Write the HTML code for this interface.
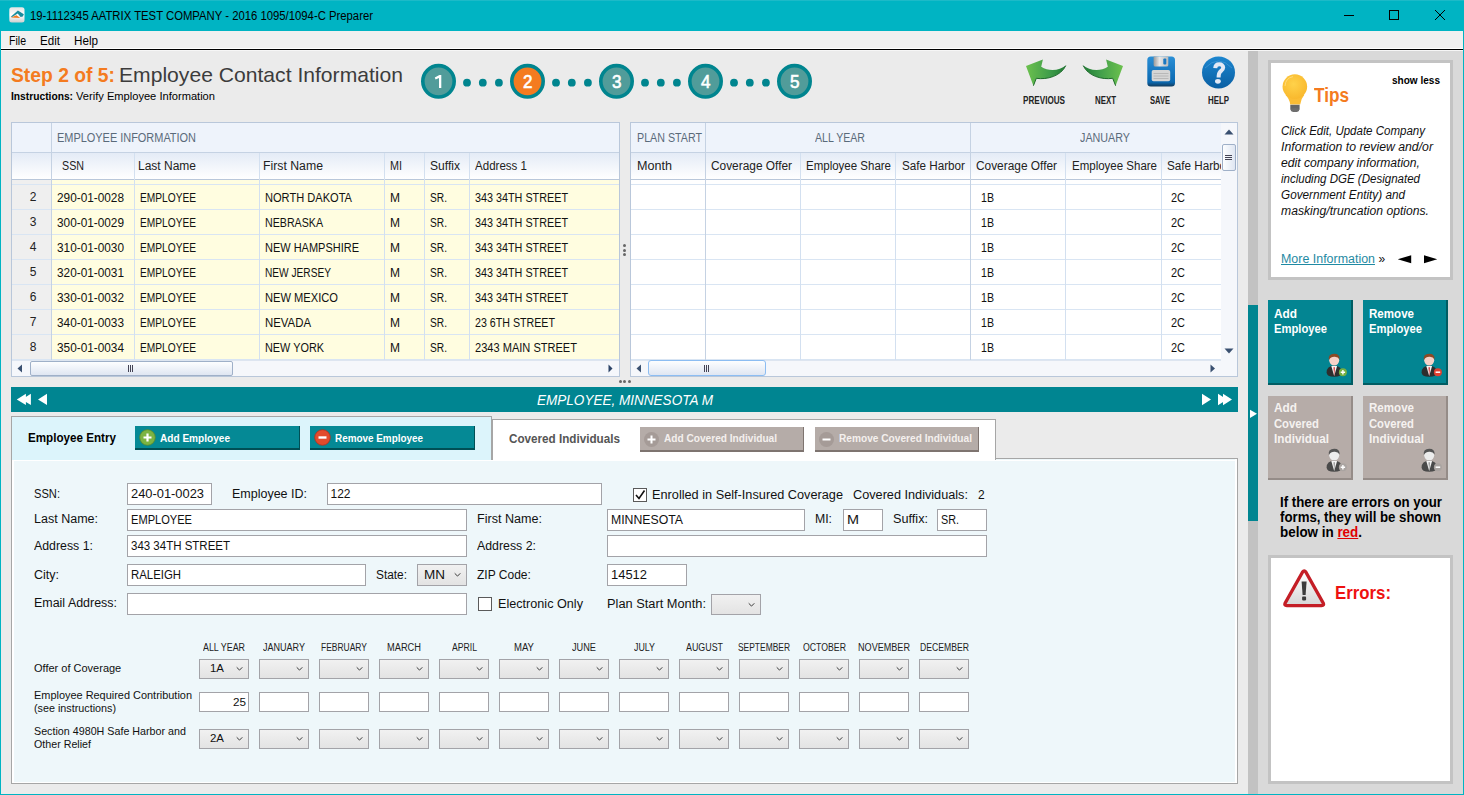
<!DOCTYPE html>
<html><head><meta charset="utf-8"><style>*{margin:0;padding:0}
html,body{width:1464px;height:795px;overflow:hidden;background:#ebebeb}
body{position:relative;font-family:"Liberation Sans",sans-serif}
div{position:absolute}
.t{white-space:nowrap;transform-origin:0 0}
</style></head><body>
<div style="left:0px;top:0px;width:1464px;height:31px;background:#00b4c3"></div>
<div style="left:0px;top:31px;width:1px;height:764px;background:#00b4c3"></div>
<div style="left:1463px;top:31px;width:1px;height:764px;background:#00b4c3"></div>
<div style="left:0px;top:794px;width:1464px;height:1px;background:#00b4c3"></div>
<div style="left:1px;top:31px;width:1462px;height:17px;background:#f0f0f0"></div>
<div style="left:1px;top:48px;width:1462px;height:1px;background:#ffffff"></div>
<div style="left:1px;top:49px;width:1462px;height:1px;background:#000000"></div>
<div style="left:1px;top:50px;width:1462px;height:1px;background:#f6f6f6"></div>
<div style="left:1px;top:51px;width:1247px;height:743px;background:#ebebeb"></div>
<div style="left:1248px;top:51px;width:10px;height:743px;background:#c2c2c2"></div>
<div style="left:1248px;top:305px;width:10px;height:216px;background:#008591"></div>
<svg style="position:absolute;left:1249px;top:409px" width="9" height="10"><path d="M1 0.7 L8 4.8 L1 9 Z" fill="#fff"/></svg>
<div style="left:1258px;top:51px;width:205px;height:743px;background:#d9d9d9"></div>
<svg style="position:absolute;left:9px;top:7px" width="16" height="16" viewBox="0 0 16 16">
<defs><linearGradient id="gi" x1="0" y1="0" x2="0" y2="1"><stop offset="0" stop-color="#e4e4e4"/><stop offset="0.5" stop-color="#ffffff"/><stop offset="1" stop-color="#cfcfcf"/></linearGradient></defs>
<rect x="0.3" y="0.3" width="15.2" height="15.2" rx="2.5" fill="url(#gi)"/>
<path d="M1.8 9.8 L8.9 3.6 L14.9 7.2 L13.8 9.6 L11.6 9.9 L8.7 6.6 L3.2 10 Z" fill="#1a8d9e"/>
<path d="M1.8 10.6 L7.5 8.2 L11.2 10.9 Z" fill="#f07a20"/></svg>
<div class="t" style="top:9.84px;font-size:12px;line-height:12px;color:#000;left:30.00px;transform:scaleX(0.9423);">19-1112345 AATRIX TEST COMPANY - 2016 1095/1094-C Preparer</div>
<div style="left:1344px;top:15px;width:10px;height:1px;background:#000"></div>
<div style="left:0px;top:0px;width:1464px;height:1px;background:#1cbac8"></div>
<div style="left:1389px;top:10px;width:10px;height:10px;border:1px solid #000;box-sizing:border-box"></div>
<svg style="position:absolute;left:1434px;top:9px" width="12" height="12"><path d="M1 1 L11 11 M11 1 L1 11" stroke="#000" stroke-width="1"/></svg>
<div class="t" style="top:34.84px;font-size:12px;line-height:12px;color:#000;left:9.00px;transform:scaleX(0.8788);">File</div>
<div class="t" style="top:34.84px;font-size:12px;line-height:12px;color:#000;left:40.00px;transform:scaleX(0.9668);">Edit</div>
<div class="t" style="top:34.84px;font-size:12px;line-height:12px;color:#000;left:74.00px;transform:scaleX(0.9722);">Help</div>
<div class="t" style="top:63.82px;font-size:21px;line-height:21px;color:#f47b20;font-weight:700;left:11.00px;transform:scaleX(0.9188);">Step 2 of 5:</div>
<div class="t" style="top:63.82px;font-size:21px;line-height:21px;color:#3c3c3c;left:119.00px;transform:scaleX(1.0054);">Employee Contact Information</div>
<div class="t" style="top:90.69px;font-size:11px;line-height:11px;color:#000;font-weight:700;left:11.00px;transform:scaleX(0.9306);">Instructions:</div>
<div class="t" style="top:90.69px;font-size:11px;line-height:11px;color:#000;left:76.00px;transform:scaleX(1.0103);">Verify Employee Information</div>
<svg style="position:absolute;left:400px;top:55px" width="430" height="55"><circle cx="38.5" cy="26.3" r="15.7" fill="#519c9a" stroke="#00858f" stroke-width="3.6"/><circle cx="67.0" cy="27.7" r="3.9" fill="#00858f"/><circle cx="82.8" cy="27.7" r="3.9" fill="#00858f"/><circle cx="98.9" cy="27.7" r="3.9" fill="#00858f"/><circle cx="127.5" cy="26.3" r="15.7" fill="#f47b20" stroke="#00858f" stroke-width="3.6"/><circle cx="156.0" cy="27.7" r="3.9" fill="#00858f"/><circle cx="171.8" cy="27.7" r="3.9" fill="#00858f"/><circle cx="187.9" cy="27.7" r="3.9" fill="#00858f"/><circle cx="216.5" cy="26.3" r="15.7" fill="#519c9a" stroke="#00858f" stroke-width="3.6"/><circle cx="245.0" cy="27.7" r="3.9" fill="#00858f"/><circle cx="260.8" cy="27.7" r="3.9" fill="#00858f"/><circle cx="276.9" cy="27.7" r="3.9" fill="#00858f"/><circle cx="305.5" cy="26.3" r="15.7" fill="#519c9a" stroke="#00858f" stroke-width="3.6"/><circle cx="334.0" cy="27.7" r="3.9" fill="#00858f"/><circle cx="349.8" cy="27.7" r="3.9" fill="#00858f"/><circle cx="365.9" cy="27.7" r="3.9" fill="#00858f"/><circle cx="394.5" cy="26.3" r="15.7" fill="#519c9a" stroke="#00858f" stroke-width="3.6"/></svg>
<svg style="position:absolute;left:430px;top:70px" width="16" height="22"><path d="M4.8 7.4 L9.4 4.9 H11.3 V18.1 H9 V7.9 L5.6 9.6 Z" fill="#fff"/></svg>
<div class="t" style="top:73.06px;font-size:18px;line-height:18px;color:#fff;-webkit-text-stroke:0.6px #fff;left:523.05px;transform:scaleX(0.9485);">2</div>
<div class="t" style="top:73.06px;font-size:18px;line-height:18px;color:#fff;-webkit-text-stroke:0.6px #fff;left:612.05px;transform:scaleX(0.9485);">3</div>
<div class="t" style="top:73.06px;font-size:18px;line-height:18px;color:#fff;-webkit-text-stroke:0.6px #fff;left:701.05px;transform:scaleX(0.9485);">4</div>
<div class="t" style="top:73.06px;font-size:18px;line-height:18px;color:#fff;-webkit-text-stroke:0.6px #fff;left:790.05px;transform:scaleX(0.9485);">5</div>
<svg style="position:absolute;left:1015px;top:50px" width="120" height="45" viewBox="0 0 120 45">
<defs><linearGradient id="ga" x1="0" y1="0" x2="1" y2="0"><stop offset="0" stop-color="#6cc14e"/><stop offset="0.6" stop-color="#3f9d4a"/><stop offset="1" stop-color="#1f7a34"/></linearGradient>
<linearGradient id="gb" x1="1" y1="0" x2="0" y2="0"><stop offset="0" stop-color="#6cc14e"/><stop offset="0.6" stop-color="#3f9d4a"/><stop offset="1" stop-color="#1f7a34"/></linearGradient></defs>
<path d="M27.9 9.4 L11 16 L18.4 35.7 L21.3 28.3 C32 30 46 26 50.8 15.6 C45 20.5 34 22 26.2 16.8 Z" fill="url(#ga)"/>
<path d="M18.4 35.7 L21.3 28.3 C32 30 46 26 50.8 15.6" stroke="#1d6a2a" stroke-width="1" fill="none"/>
<path d="M91.1 9.4 L108 16 L100.6 35.7 L97.7 28.3 C87 30 73 26 68.2 15.6 C74 20.5 85 22 92.8 16.8 Z" fill="url(#gb)"/>
<path d="M100.6 35.7 L97.7 28.3 C87 30 73 26 68.2 15.6" stroke="#1d6a2a" stroke-width="1" fill="none"/>
</svg>
<svg style="position:absolute;left:1147px;top:56px" width="30" height="32" viewBox="0 0 30 32">
<defs><linearGradient id="gs" x1="0" y1="0" x2="0" y2="1"><stop offset="0" stop-color="#2a8fd6"/><stop offset="0.85" stop-color="#0a68b0"/><stop offset="1" stop-color="#123a5a"/></linearGradient>
<linearGradient id="gm" x1="0" y1="0" x2="1" y2="0"><stop offset="0" stop-color="#999"/><stop offset="0.4" stop-color="#e8e8e8"/><stop offset="1" stop-color="#bbb"/></linearGradient></defs>
<rect x="0.3" y="0.6" width="27.7" height="30" rx="3.5" fill="url(#gs)"/>
<path d="M6.6 0.6 H21.3 V9 Q21.3 10.6 19.7 10.6 H8.2 Q6.6 10.6 6.6 9 Z" fill="url(#gm)"/>
<rect x="16.3" y="2.5" width="3" height="6" rx="1" fill="#1a78c2"/>
<rect x="4.7" y="14" width="18.5" height="11.3" rx="1.8" fill="#d6d6d6"/>
<path d="M6.5 17.5 H21.5 M6.5 20 H21.5 M6.5 22.5 H21.5" stroke="#b0b0b0" stroke-width="0.8"/>
</svg>
<svg style="position:absolute;left:1201px;top:56px" width="35" height="34" viewBox="0 0 35 34">
<defs><linearGradient id="gh" x1="0" y1="0" x2="0" y2="1"><stop offset="0" stop-color="#1c86cf"/><stop offset="1" stop-color="#0a5fa3"/></linearGradient></defs>
<ellipse cx="17.5" cy="16.4" rx="16.5" ry="16" fill="url(#gh)"/>
<path d="M4 12 Q17.5 -2 31 12" stroke="#5aa8e0" stroke-width="0.8" fill="none" opacity="0.6"/>
<path d="M14.2 12.2 C14.4 9.2 16.3 8.2 18.2 8.2 C20.6 8.2 22.2 9.6 22.2 11.6 C22.2 13.8 20.2 14.8 19.1 15.8 C18.2 16.7 17.6 17.6 17.6 21.6" stroke="#e3e9f5" stroke-width="4" fill="none"/>
<ellipse cx="16.9" cy="25.3" rx="2.9" ry="2.4" fill="#e3e9f5"/>
</svg>
<div class="t" style="top:96.03px;font-size:10px;line-height:10px;color:#222;font-weight:700;left:1023.00px;transform:scaleX(0.8126);">PREVIOUS</div>
<div class="t" style="top:96.03px;font-size:10px;line-height:10px;color:#222;font-weight:700;left:1094.50px;transform:scaleX(0.7873);">NEXT</div>
<div class="t" style="top:96.03px;font-size:10px;line-height:10px;color:#222;font-weight:700;left:1150.00px;transform:scaleX(0.7547);">SAVE</div>
<div class="t" style="top:96.03px;font-size:10px;line-height:10px;color:#222;font-weight:700;left:1207.50px;transform:scaleX(0.7873);">HELP</div>
<div style="left:11px;top:122px;width:609px;height:255px;background:#f3f6fb;border:1px solid #b9c7da;box-sizing:border-box"></div>
<div style="left:12px;top:123px;width:607px;height:29px;background:#eef3fb"></div>
<div style="left:12px;top:152px;width:607px;height:1px;background:#c5d2e3"></div>
<div style="left:12px;top:153px;width:607px;height:26px;background:linear-gradient(#e4ebf6,#ffffff)"></div>
<div style="left:12px;top:179px;width:607px;height:1px;background:#b9c7da"></div>
<div style="left:12px;top:180px;width:607px;height:180px;background:#fffde0"></div>
<div style="left:12px;top:180px;width:39px;height:180px;background:#efefef"></div>
<div style="left:12px;top:184px;width:607px;height:1px;background:#d9e5f3"></div>
<div style="left:12px;top:209px;width:607px;height:1px;background:#d9e5f3"></div>
<div style="left:12px;top:234px;width:607px;height:1px;background:#d9e5f3"></div>
<div style="left:12px;top:259px;width:607px;height:1px;background:#d9e5f3"></div>
<div style="left:12px;top:284px;width:607px;height:1px;background:#d9e5f3"></div>
<div style="left:12px;top:309px;width:607px;height:1px;background:#d9e5f3"></div>
<div style="left:12px;top:334px;width:607px;height:1px;background:#d9e5f3"></div>
<div style="left:12px;top:359px;width:607px;height:1px;background:#d9e5f3"></div>
<div style="left:51px;top:123px;width:1px;height:237px;background:#c5d2e3"></div>
<div style="left:134px;top:153px;width:1px;height:207px;background:#d3e0f0"></div>
<div style="left:259px;top:153px;width:1px;height:207px;background:#d3e0f0"></div>
<div style="left:384px;top:153px;width:1px;height:207px;background:#d3e0f0"></div>
<div style="left:424px;top:153px;width:1px;height:207px;background:#d3e0f0"></div>
<div style="left:469px;top:153px;width:1px;height:207px;background:#d3e0f0"></div>
<div class="t" style="top:131.84px;font-size:12px;line-height:12px;color:#5a6a7a;left:57.00px;transform:scaleX(0.9117);">EMPLOYEE INFORMATION</div>
<div class="t" style="top:159.84px;font-size:12px;line-height:12px;color:#222;left:62.00px;transform:scaleX(0.8911);">SSN</div>
<div class="t" style="top:159.84px;font-size:12px;line-height:12px;color:#222;left:138.00px;">Last Name</div>
<div class="t" style="top:159.84px;font-size:12px;line-height:12px;color:#222;left:263.00px;transform:scaleX(1.0226);">First Name</div>
<div class="t" style="top:159.84px;font-size:12px;line-height:12px;color:#222;left:390.00px;transform:scaleX(0.8993);">MI</div>
<div class="t" style="top:159.84px;font-size:12px;line-height:12px;color:#222;left:430.00px;transform:scaleX(1.0068);">Suffix</div>
<div class="t" style="top:159.84px;font-size:12px;line-height:12px;color:#222;left:475.00px;transform:scaleX(0.9624);">Address 1</div>
<div class="t" style="top:190.84px;font-size:12px;line-height:12px;color:#222;left:29.66px;">2</div>
<div class="t" style="top:191.84px;font-size:12px;line-height:12px;color:#111;left:57.20px;transform:scaleX(0.9844);">290-01-0028</div>
<div class="t" style="top:191.84px;font-size:12px;line-height:12px;color:#111;left:140.00px;transform:scaleX(0.8481);">EMPLOYEE</div>
<div class="t" style="top:191.84px;font-size:12px;line-height:12px;color:#111;left:265.00px;transform:scaleX(0.9232);">NORTH DAKOTA</div>
<div class="t" style="top:191.84px;font-size:12px;line-height:12px;color:#111;left:390.00px;">M</div>
<div class="t" style="top:191.84px;font-size:12px;line-height:12px;color:#111;left:430.00px;transform:scaleX(0.8493);">SR.</div>
<div class="t" style="top:191.84px;font-size:12px;line-height:12px;color:#111;left:475.00px;transform:scaleX(0.8996);">343 34TH STREET</div>
<div class="t" style="top:215.84px;font-size:12px;line-height:12px;color:#222;left:29.66px;">3</div>
<div class="t" style="top:216.84px;font-size:12px;line-height:12px;color:#111;left:57.20px;transform:scaleX(0.9844);">300-01-0029</div>
<div class="t" style="top:216.84px;font-size:12px;line-height:12px;color:#111;left:140.00px;transform:scaleX(0.8481);">EMPLOYEE</div>
<div class="t" style="top:216.84px;font-size:12px;line-height:12px;color:#111;left:265.00px;transform:scaleX(0.8874);">NEBRASKA</div>
<div class="t" style="top:216.84px;font-size:12px;line-height:12px;color:#111;left:390.00px;">M</div>
<div class="t" style="top:216.84px;font-size:12px;line-height:12px;color:#111;left:430.00px;transform:scaleX(0.8493);">SR.</div>
<div class="t" style="top:216.84px;font-size:12px;line-height:12px;color:#111;left:475.00px;transform:scaleX(0.8996);">343 34TH STREET</div>
<div class="t" style="top:240.84px;font-size:12px;line-height:12px;color:#222;left:29.66px;">4</div>
<div class="t" style="top:241.84px;font-size:12px;line-height:12px;color:#111;left:57.20px;transform:scaleX(0.9844);">310-01-0030</div>
<div class="t" style="top:241.84px;font-size:12px;line-height:12px;color:#111;left:140.00px;transform:scaleX(0.8481);">EMPLOYEE</div>
<div class="t" style="top:241.84px;font-size:12px;line-height:12px;color:#111;left:265.00px;transform:scaleX(0.9154);">NEW HAMPSHIRE</div>
<div class="t" style="top:241.84px;font-size:12px;line-height:12px;color:#111;left:390.00px;">M</div>
<div class="t" style="top:241.84px;font-size:12px;line-height:12px;color:#111;left:430.00px;transform:scaleX(0.8493);">SR.</div>
<div class="t" style="top:241.84px;font-size:12px;line-height:12px;color:#111;left:475.00px;transform:scaleX(0.8996);">343 34TH STREET</div>
<div class="t" style="top:265.84px;font-size:12px;line-height:12px;color:#222;left:29.66px;">5</div>
<div class="t" style="top:266.84px;font-size:12px;line-height:12px;color:#111;left:57.20px;transform:scaleX(0.9844);">320-01-0031</div>
<div class="t" style="top:266.84px;font-size:12px;line-height:12px;color:#111;left:140.00px;transform:scaleX(0.8481);">EMPLOYEE</div>
<div class="t" style="top:266.84px;font-size:12px;line-height:12px;color:#111;left:265.00px;transform:scaleX(0.8460);">NEW JERSEY</div>
<div class="t" style="top:266.84px;font-size:12px;line-height:12px;color:#111;left:390.00px;">M</div>
<div class="t" style="top:266.84px;font-size:12px;line-height:12px;color:#111;left:430.00px;transform:scaleX(0.8493);">SR.</div>
<div class="t" style="top:266.84px;font-size:12px;line-height:12px;color:#111;left:475.00px;transform:scaleX(0.8996);">343 34TH STREET</div>
<div class="t" style="top:290.84px;font-size:12px;line-height:12px;color:#222;left:29.66px;">6</div>
<div class="t" style="top:291.84px;font-size:12px;line-height:12px;color:#111;left:57.20px;transform:scaleX(0.9844);">330-01-0032</div>
<div class="t" style="top:291.84px;font-size:12px;line-height:12px;color:#111;left:140.00px;transform:scaleX(0.8481);">EMPLOYEE</div>
<div class="t" style="top:291.84px;font-size:12px;line-height:12px;color:#111;left:265.00px;transform:scaleX(0.9279);">NEW MEXICO</div>
<div class="t" style="top:291.84px;font-size:12px;line-height:12px;color:#111;left:390.00px;">M</div>
<div class="t" style="top:291.84px;font-size:12px;line-height:12px;color:#111;left:430.00px;transform:scaleX(0.8493);">SR.</div>
<div class="t" style="top:291.84px;font-size:12px;line-height:12px;color:#111;left:475.00px;transform:scaleX(0.8996);">343 34TH STREET</div>
<div class="t" style="top:315.84px;font-size:12px;line-height:12px;color:#222;left:29.66px;">7</div>
<div class="t" style="top:316.84px;font-size:12px;line-height:12px;color:#111;left:57.20px;transform:scaleX(0.9844);">340-01-0033</div>
<div class="t" style="top:316.84px;font-size:12px;line-height:12px;color:#111;left:140.00px;transform:scaleX(0.8481);">EMPLOYEE</div>
<div class="t" style="top:316.84px;font-size:12px;line-height:12px;color:#111;left:265.00px;transform:scaleX(0.9491);">NEVADA</div>
<div class="t" style="top:316.84px;font-size:12px;line-height:12px;color:#111;left:390.00px;">M</div>
<div class="t" style="top:316.84px;font-size:12px;line-height:12px;color:#111;left:430.00px;transform:scaleX(0.8493);">SR.</div>
<div class="t" style="top:316.84px;font-size:12px;line-height:12px;color:#111;left:475.00px;transform:scaleX(0.8886);">23 6TH STREET</div>
<div class="t" style="top:340.84px;font-size:12px;line-height:12px;color:#222;left:29.66px;">8</div>
<div class="t" style="top:341.84px;font-size:12px;line-height:12px;color:#111;left:57.20px;transform:scaleX(0.9844);">350-01-0034</div>
<div class="t" style="top:341.84px;font-size:12px;line-height:12px;color:#111;left:140.00px;transform:scaleX(0.8481);">EMPLOYEE</div>
<div class="t" style="top:341.84px;font-size:12px;line-height:12px;color:#111;left:265.00px;transform:scaleX(0.9060);">NEW YORK</div>
<div class="t" style="top:341.84px;font-size:12px;line-height:12px;color:#111;left:390.00px;">M</div>
<div class="t" style="top:341.84px;font-size:12px;line-height:12px;color:#111;left:430.00px;transform:scaleX(0.8493);">SR.</div>
<div class="t" style="top:341.84px;font-size:12px;line-height:12px;color:#111;left:475.00px;transform:scaleX(0.9214);">2343 MAIN STREET</div>
<div style="left:12px;top:360px;width:607px;height:16px;background:#f5f7fb"></div>
<div style="left:12px;top:360px;width:607px;height:1px;background:#dde5f0"></div>
<svg style="position:absolute;left:16px;top:364px" width="8" height="9"><path d="M6 0.5 L1.5 4.5 L6 8.5 Z" fill="#3a5070"/></svg>
<svg style="position:absolute;left:607px;top:364px" width="8" height="9"><path d="M1.5 0.5 L5.5 4.5 L1.5 8.5 Z" fill="#2c4468"/></svg>
<div style="left:30px;top:361px;width:203px;height:15px;background:linear-gradient(#fdfeff,#dfe6f2);border:1px solid #9fb0c8;border-radius:2px;box-sizing:border-box"></div>
<div style="left:128px;top:365px;width:1px;height:7px;background:#445"></div>
<div style="left:130px;top:365px;width:1px;height:7px;background:#445"></div>
<div style="left:132px;top:365px;width:1px;height:7px;background:#445"></div>
<div style="left:630px;top:122px;width:608px;height:255px;background:#f3f6fb;border:1px solid #b9c7da;box-sizing:border-box"></div>
<div style="left:631px;top:123px;width:590px;height:29px;background:#eef3fb"></div>
<div style="left:631px;top:152px;width:590px;height:1px;background:#c5d2e3"></div>
<div style="left:631px;top:153px;width:590px;height:26px;background:linear-gradient(#e4ebf6,#ffffff)"></div>
<div style="left:631px;top:179px;width:590px;height:1px;background:#b9c7da"></div>
<div style="left:631px;top:180px;width:590px;height:180px;background:#ffffff"></div>
<div style="left:631px;top:184px;width:590px;height:1px;background:#d9e5f3"></div>
<div style="left:631px;top:209px;width:590px;height:1px;background:#d9e5f3"></div>
<div style="left:631px;top:234px;width:590px;height:1px;background:#d9e5f3"></div>
<div style="left:631px;top:259px;width:590px;height:1px;background:#d9e5f3"></div>
<div style="left:631px;top:284px;width:590px;height:1px;background:#d9e5f3"></div>
<div style="left:631px;top:309px;width:590px;height:1px;background:#d9e5f3"></div>
<div style="left:631px;top:334px;width:590px;height:1px;background:#d9e5f3"></div>
<div style="left:631px;top:359px;width:590px;height:1px;background:#d9e5f3"></div>
<div style="left:705px;top:123px;width:1px;height:237px;background:#c5d2e3"></div>
<div style="left:970px;top:123px;width:1px;height:237px;background:#c5d2e3"></div>
<div style="left:800px;top:153px;width:1px;height:207px;background:#d3e0f0"></div>
<div style="left:895px;top:153px;width:1px;height:207px;background:#d3e0f0"></div>
<div style="left:1065px;top:153px;width:1px;height:207px;background:#d3e0f0"></div>
<div style="left:1161px;top:153px;width:1px;height:207px;background:#d3e0f0"></div>
<div class="t" style="top:131.84px;font-size:12px;line-height:12px;color:#5a6a7a;left:636.50px;transform:scaleX(0.8914);">PLAN START</div>
<div class="t" style="top:131.84px;font-size:12px;line-height:12px;color:#5a6a7a;left:814.50px;transform:scaleX(0.8818);">ALL YEAR</div>
<div class="t" style="top:131.84px;font-size:12px;line-height:12px;color:#5a6a7a;left:1080.00px;transform:scaleX(0.8961);">JANUARY</div>
<div class="t" style="top:159.84px;font-size:12px;line-height:12px;color:#222;left:637.00px;transform:scaleX(1.0492);">Month</div>
<div class="t" style="top:159.84px;font-size:12px;line-height:12px;color:#222;left:710.50px;transform:scaleX(0.9899);">Coverage Offer</div>
<div class="t" style="top:159.84px;font-size:12px;line-height:12px;color:#222;left:806.00px;transform:scaleX(0.9581);">Employee Share</div>
<div class="t" style="top:159.84px;font-size:12px;line-height:12px;color:#222;left:901.50px;transform:scaleX(0.9737);">Safe Harbor</div>
<div class="t" style="top:159.84px;font-size:12px;line-height:12px;color:#222;left:976.00px;transform:scaleX(0.9899);">Coverage Offer</div>
<div class="t" style="top:159.84px;font-size:12px;line-height:12px;color:#222;left:1071.50px;transform:scaleX(0.9581);">Employee Share</div>
<div style="left:1166px;top:153px;width:55px;height:26px;overflow:hidden">
<div class="t" style="top:6.84px;font-size:12px;line-height:12px;color:#222;left:1.00px;transform:scaleX(0.9737);">Safe Harbor</div>
</div>
<div class="t" style="top:191.84px;font-size:12px;line-height:12px;color:#111;left:981.00px;transform:scaleX(0.8851);">1B</div>
<div class="t" style="top:191.84px;font-size:12px;line-height:12px;color:#111;left:1171.00px;transform:scaleX(0.9124);">2C</div>
<div class="t" style="top:216.84px;font-size:12px;line-height:12px;color:#111;left:981.00px;transform:scaleX(0.8851);">1B</div>
<div class="t" style="top:216.84px;font-size:12px;line-height:12px;color:#111;left:1171.00px;transform:scaleX(0.9124);">2C</div>
<div class="t" style="top:241.84px;font-size:12px;line-height:12px;color:#111;left:981.00px;transform:scaleX(0.8851);">1B</div>
<div class="t" style="top:241.84px;font-size:12px;line-height:12px;color:#111;left:1171.00px;transform:scaleX(0.9124);">2C</div>
<div class="t" style="top:266.84px;font-size:12px;line-height:12px;color:#111;left:981.00px;transform:scaleX(0.8851);">1B</div>
<div class="t" style="top:266.84px;font-size:12px;line-height:12px;color:#111;left:1171.00px;transform:scaleX(0.9124);">2C</div>
<div class="t" style="top:291.84px;font-size:12px;line-height:12px;color:#111;left:981.00px;transform:scaleX(0.8851);">1B</div>
<div class="t" style="top:291.84px;font-size:12px;line-height:12px;color:#111;left:1171.00px;transform:scaleX(0.9124);">2C</div>
<div class="t" style="top:316.84px;font-size:12px;line-height:12px;color:#111;left:981.00px;transform:scaleX(0.8851);">1B</div>
<div class="t" style="top:316.84px;font-size:12px;line-height:12px;color:#111;left:1171.00px;transform:scaleX(0.9124);">2C</div>
<div class="t" style="top:341.84px;font-size:12px;line-height:12px;color:#111;left:981.00px;transform:scaleX(0.8851);">1B</div>
<div class="t" style="top:341.84px;font-size:12px;line-height:12px;color:#111;left:1171.00px;transform:scaleX(0.9124);">2C</div>
<div style="left:1221px;top:123px;width:16px;height:237px;background:#f5f7fb"></div>
<svg style="position:absolute;left:1224px;top:128px" width="10" height="8"><path d="M0.5 6.5 L5 1.5 L9.5 6.5 Z" fill="#3a5070"/></svg>
<svg style="position:absolute;left:1224px;top:347px" width="10" height="8"><path d="M0.5 1.5 L5 6.5 L9.5 1.5 Z" fill="#3a5070"/></svg>
<div style="left:1222px;top:144px;width:14px;height:27px;background:linear-gradient(90deg,#fdfeff,#dfe6f2);border:1px solid #9fb0c8;border-radius:2px;box-sizing:border-box"></div>
<div style="left:1225px;top:155px;width:7px;height:1px;background:#445"></div>
<div style="left:1225px;top:157px;width:7px;height:1px;background:#445"></div>
<div style="left:1225px;top:159px;width:7px;height:1px;background:#445"></div>
<div style="left:631px;top:360px;width:606px;height:16px;background:#f5f7fb"></div>
<div style="left:631px;top:360px;width:590px;height:1px;background:#dde5f0"></div>
<svg style="position:absolute;left:635px;top:364px" width="8" height="9"><path d="M6 0.5 L1.5 4.5 L6 8.5 Z" fill="#3a5070"/></svg>
<svg style="position:absolute;left:1209px;top:364px" width="8" height="9"><path d="M1.5 0.5 L6 4.5 L1.5 8.5 Z" fill="#3a5070"/></svg>
<div style="left:648px;top:360px;width:118px;height:16px;background:linear-gradient(#fdfeff,#dfe6f2);border:1px solid #8cbdf2;border-radius:3px;box-sizing:border-box"></div>
<div style="left:704px;top:365px;width:1px;height:7px;background:#445"></div>
<div style="left:706px;top:365px;width:1px;height:7px;background:#445"></div>
<div style="left:708px;top:365px;width:1px;height:7px;background:#445"></div>
<div style="left:623px;top:244px;width:3px;height:3px;background:#666;border-radius:50%"></div>
<div style="left:623px;top:248.5px;width:3px;height:3px;background:#666;border-radius:50%"></div>
<div style="left:623px;top:253px;width:3px;height:3px;background:#666;border-radius:50%"></div>
<div style="left:618.5px;top:380px;width:3px;height:3px;background:#666;border-radius:50%"></div>
<div style="left:623px;top:380px;width:3px;height:3px;background:#666;border-radius:50%"></div>
<div style="left:627.5px;top:380px;width:3px;height:3px;background:#666;border-radius:50%"></div>
<div style="left:11px;top:387px;width:1227px;height:25px;background:#008591"></div>
<svg style="position:absolute;left:14px;top:392px" width="40" height="16"><path d="M2.8 7.5 L11.9 1.8 V12.9 Z M7.8 7.5 L16.9 1.8 V12.9 Z M24 7.5 L33 1.8 V12.9 Z" fill="#fff"/></svg>
<svg style="position:absolute;left:1198px;top:392px" width="40" height="16"><path d="M4 1.8 L13 7.5 L4 13.2 Z M20 1.8 L29 7.5 L20 13.2 Z M25 1.8 L34 7.5 L25 13.2 Z" fill="#fff"/></svg>
<div class="t" style="top:392.13px;font-size:15.2px;line-height:15.2px;color:#fff;font-style:italic;left:536.50px;transform:scaleX(0.8913);">EMPLOYEE, MINNESOTA M</div>
<div style="left:11px;top:458px;width:1227px;height:326px;background:#eef7fa;border:1px solid #a6a6a6;box-sizing:border-box"></div>
<div style="left:12px;top:459px;width:2px;height:324px;background:#fff"></div>
<div style="left:12px;top:460px;width:1225px;height:1px;background:#fff"></div>
<div style="left:12px;top:782px;width:1225px;height:1px;background:#fff"></div>
<div style="left:1235px;top:459px;width:2px;height:324px;background:#fff"></div>
<div style="left:11px;top:416px;width:481px;height:44px;background:#dcf4fb;border-top:1px solid #a6a6a6;border-left:1px solid #a6a6a6;border-right:1px solid #a6a6a6;box-sizing:border-box"></div>
<div style="left:492px;top:419px;width:504px;height:41px;background:#fff;border-top:1px solid #a6a6a6;border-left:1px solid #a6a6a6;border-right:1px solid #a6a6a6;box-sizing:border-box"></div>
<div class="t" style="top:431.84px;font-size:12px;line-height:12px;color:#000;font-weight:700;left:27.50px;transform:scaleX(0.9702);">Employee Entry</div>
<div style="left:135px;top:426px;width:165px;height:24px;background:#058995;box-shadow:inset -1px -2px 0 #004f55"></div>
<svg style="position:absolute;left:139px;top:429px" width="17" height="17"><circle cx="8.5" cy="8.5" r="7.8" fill="#7cb342"/><circle cx="8.5" cy="8.5" r="7.8" fill="none" stroke="#5a8a2a" stroke-width="0.8"/><path d="M8.5 4.5 V12.5 M4.5 8.5 H12.5" stroke="#fff" stroke-width="2.2"/></svg>
<div class="t" style="top:432.69px;font-size:11px;line-height:11px;color:#fff;font-weight:700;left:160.00px;transform:scaleX(0.9162);">Add Employee</div>
<div style="left:310px;top:426px;width:165px;height:24px;background:#058995;box-shadow:inset -1px -2px 0 #004f55"></div>
<svg style="position:absolute;left:314px;top:429px" width="17" height="17"><circle cx="8.5" cy="8.5" r="7.8" fill="#e24b2c"/><circle cx="8.5" cy="8.5" r="7.8" fill="none" stroke="#b03020" stroke-width="0.8"/><path d="M4.5 8.5 H12.5" stroke="#fff" stroke-width="2.4"/></svg>
<div class="t" style="top:432.69px;font-size:11px;line-height:11px;color:#fff;font-weight:700;left:335.00px;transform:scaleX(0.8995);">Remove Employee</div>
<div class="t" style="top:432.84px;font-size:12px;line-height:12px;color:#555;font-weight:700;left:508.50px;transform:scaleX(0.9734);">Covered Individuals</div>
<div style="left:640px;top:427px;width:164px;height:25px;background:#b5aca8;box-shadow:inset -1px -2px 0 #7e7470"></div>
<svg style="position:absolute;left:643px;top:431px" width="17" height="17"><circle cx="8.5" cy="8.5" r="7.5" fill="#a59b97"/><path d="M8.5 4.5 V12.5 M4.5 8.5 H12.5" stroke="#fff" stroke-width="2"/></svg>
<div class="t" style="top:433.19px;font-size:11px;line-height:11px;color:#f4f0ee;font-weight:700;left:664.00px;transform:scaleX(0.9198);">Add Covered Individual</div>
<div style="left:815px;top:427px;width:164px;height:25px;background:#b5aca8;box-shadow:inset -1px -2px 0 #7e7470"></div>
<svg style="position:absolute;left:818px;top:431px" width="17" height="17"><circle cx="8.5" cy="8.5" r="7.5" fill="#a59b97"/><path d="M4.5 8.5 H12.5" stroke="#fff" stroke-width="2"/></svg>
<div class="t" style="top:433.19px;font-size:11px;line-height:11px;color:#f4f0ee;font-weight:700;left:839.00px;transform:scaleX(0.9219);">Remove Covered Individual</div>
<div class="t" style="top:487.84px;font-size:12px;line-height:12px;color:#111;left:34.00px;transform:scaleX(0.9281);">SSN:</div>
<div style="left:127px;top:483px;width:85px;height:22px;background:#fff;border:1px solid #a3a3a8;box-sizing:border-box"></div>
<div class="t" style="top:487.84px;font-size:12px;line-height:12px;color:#111;left:130.50px;transform:scaleX(1.0725);">240-01-0023</div>
<div class="t" style="top:487.84px;font-size:12px;line-height:12px;color:#111;left:232.00px;transform:scaleX(1.0412);">Employee ID:</div>
<div style="left:327px;top:483px;width:275px;height:22px;background:#fff;border:1px solid #a3a3a8;box-sizing:border-box"></div>
<div class="t" style="top:487.84px;font-size:12px;line-height:12px;color:#111;left:330.50px;">122</div>
<div style="left:633px;top:488px;width:14px;height:14px;background:#fff;border:1px solid #5a5a5a;box-sizing:border-box"></div>
<svg style="position:absolute;left:634px;top:489px" width="12" height="12"><path d="M2 6 L5 9.5 L10.5 1.5" stroke="#111" stroke-width="1.6" fill="none"/></svg>
<div class="t" style="top:489.34px;font-size:12px;line-height:12px;color:#111;left:652.00px;transform:scaleX(1.0605);">Enrolled in Self-Insured Coverage</div>
<div class="t" style="top:489.34px;font-size:12px;line-height:12px;color:#111;left:853.00px;transform:scaleX(1.0576);">Covered Individuals:</div>
<div class="t" style="top:489.34px;font-size:12px;line-height:12px;color:#111;left:978.00px;">2</div>
<div class="t" style="top:513.34px;font-size:12px;line-height:12px;color:#111;left:34.00px;transform:scaleX(1.0430);">Last Name:</div>
<div style="left:127px;top:509px;width:340px;height:22px;background:#fff;border:1px solid #a3a3a8;box-sizing:border-box"></div>
<div class="t" style="top:513.84px;font-size:12px;line-height:12px;color:#111;left:130.50px;transform:scaleX(0.9238);">EMPLOYEE</div>
<div class="t" style="top:513.34px;font-size:12px;line-height:12px;color:#111;left:477.00px;transform:scaleX(1.0481);">First Name:</div>
<div style="left:607px;top:509px;width:198px;height:22px;background:#fff;border:1px solid #a3a3a8;box-sizing:border-box"></div>
<div class="t" style="top:513.84px;font-size:12px;line-height:12px;color:#111;left:610.50px;transform:scaleX(1.0220);">MINNESOTA</div>
<div class="t" style="top:513.34px;font-size:12px;line-height:12px;color:#111;left:815.00px;transform:scaleX(1.0197);">MI:</div>
<div style="left:843px;top:509px;width:40px;height:22px;background:#fff;border:1px solid #a3a3a8;box-sizing:border-box"></div>
<div class="t" style="top:513.84px;font-size:12px;line-height:12px;color:#111;left:846.50px;transform:scaleX(1.2000);">M</div>
<div class="t" style="top:513.34px;font-size:12px;line-height:12px;color:#111;left:893.00px;transform:scaleX(1.0561);">Suffix:</div>
<div style="left:937px;top:509px;width:50px;height:22px;background:#fff;border:1px solid #a3a3a8;box-sizing:border-box"></div>
<div class="t" style="top:513.84px;font-size:12px;line-height:12px;color:#111;left:940.50px;transform:scaleX(0.8993);">SR.</div>
<div class="t" style="top:540.14px;font-size:12px;line-height:12px;color:#111;left:34.00px;transform:scaleX(1.0283);">Address 1:</div>
<div style="left:127px;top:535px;width:340px;height:22px;background:#fff;border:1px solid #a3a3a8;box-sizing:border-box"></div>
<div class="t" style="top:539.84px;font-size:12px;line-height:12px;color:#111;left:130.50px;transform:scaleX(0.9577);">343 34TH STREET</div>
<div class="t" style="top:540.14px;font-size:12px;line-height:12px;color:#111;left:477.00px;transform:scaleX(1.0283);">Address 2:</div>
<div style="left:607px;top:535px;width:380px;height:22px;background:#fff;border:1px solid #a3a3a8;box-sizing:border-box"></div>
<div class="t" style="top:569.14px;font-size:12px;line-height:12px;color:#111;left:34.00px;transform:scaleX(1.0417);">City:</div>
<div style="left:127px;top:564px;width:239px;height:22px;background:#fff;border:1px solid #a3a3a8;box-sizing:border-box"></div>
<div class="t" style="top:568.84px;font-size:12px;line-height:12px;color:#111;left:130.50px;transform:scaleX(0.9490);">RALEIGH</div>
<div class="t" style="top:569.14px;font-size:12px;line-height:12px;color:#111;left:376.00px;transform:scaleX(0.9885);">State:</div>
<div style="left:417px;top:564px;width:50px;height:22px;background:linear-gradient(#f1f1f1,#e3e3e3);border:1px solid #a3a3a8;box-sizing:border-box"></div>
<svg style="position:absolute;left:454px;top:572.0px" width="7" height="6"><path d="M0.7 1.3 L3.5 4.1 L6.3 1.3" stroke="#3a3a3a" stroke-width="1" fill="none"/></svg>
<div class="t" style="top:568.84px;font-size:12px;line-height:12px;color:#111;left:423.50px;transform:scaleX(1.1247);">MN</div>
<div class="t" style="top:569.14px;font-size:12px;line-height:12px;color:#111;left:477.00px;">ZIP Code:</div>
<div style="left:607px;top:564px;width:80px;height:22px;background:#fff;border:1px solid #a3a3a8;box-sizing:border-box"></div>
<div class="t" style="top:568.84px;font-size:12px;line-height:12px;color:#111;left:610.50px;transform:scaleX(1.0787);">14512</div>
<div class="t" style="top:597.34px;font-size:12px;line-height:12px;color:#111;left:34.00px;transform:scaleX(1.0369);">Email Address:</div>
<div style="left:127px;top:593px;width:340px;height:22px;background:#fff;border:1px solid #a3a3a8;box-sizing:border-box"></div>
<div style="left:478px;top:597px;width:14px;height:14px;background:#fff;border:1px solid #5a5a5a;box-sizing:border-box"></div>
<div class="t" style="top:597.84px;font-size:12px;line-height:12px;color:#111;left:497.50px;transform:scaleX(1.0532);">Electronic Only</div>
<div class="t" style="top:597.84px;font-size:12px;line-height:12px;color:#111;left:607.40px;transform:scaleX(1.0677);">Plan Start Month:</div>
<div style="left:711px;top:594px;width:50px;height:21px;background:linear-gradient(#f1f1f1,#e3e3e3);border:1px solid #a3a3a8;box-sizing:border-box"></div>
<svg style="position:absolute;left:748px;top:601.5px" width="7" height="6"><path d="M0.7 1.3 L3.5 4.1 L6.3 1.3" stroke="#3a3a3a" stroke-width="1" fill="none"/></svg>
<div class="t" style="top:642.54px;font-size:10px;line-height:10px;color:#222;left:203.00px;transform:scaleX(0.8886);">ALL YEAR</div>
<div style="left:199px;top:659px;width:50px;height:20px;background:linear-gradient(#f1f1f1,#e3e3e3);border:1px solid #a3a3a8;box-sizing:border-box"></div>
<svg style="position:absolute;left:236px;top:666.0px" width="7" height="6"><path d="M0.7 1.3 L3.5 4.1 L6.3 1.3" stroke="#3a3a3a" stroke-width="1" fill="none"/></svg>
<div class="t" style="top:662.69px;font-size:11px;line-height:11px;color:#111;left:209.50px;transform:scaleX(1.0394);">1A</div>
<div style="left:199px;top:692px;width:50px;height:20px;background:#fff;border:1px solid #a3a3a8;box-sizing:border-box"></div>
<div class="t" style="top:697.19px;font-size:11px;line-height:11px;color:#111;left:232.50px;transform:scaleX(1.0612);">25</div>
<div style="left:199px;top:729px;width:50px;height:20px;background:linear-gradient(#f1f1f1,#e3e3e3);border:1px solid #a3a3a8;box-sizing:border-box"></div>
<svg style="position:absolute;left:236px;top:736.0px" width="7" height="6"><path d="M0.7 1.3 L3.5 4.1 L6.3 1.3" stroke="#3a3a3a" stroke-width="1" fill="none"/></svg>
<div class="t" style="top:732.69px;font-size:11px;line-height:11px;color:#111;left:209.50px;transform:scaleX(1.0394);">2A</div>
<div class="t" style="top:642.54px;font-size:10px;line-height:10px;color:#222;left:263.00px;transform:scaleX(0.9032);">JANUARY</div>
<div style="left:259px;top:659px;width:50px;height:20px;background:linear-gradient(#f1f1f1,#e3e3e3);border:1px solid #a3a3a8;box-sizing:border-box"></div>
<svg style="position:absolute;left:296px;top:666.0px" width="7" height="6"><path d="M0.7 1.3 L3.5 4.1 L6.3 1.3" stroke="#3a3a3a" stroke-width="1" fill="none"/></svg>
<div style="left:259px;top:692px;width:50px;height:20px;background:#fff;border:1px solid #a3a3a8;box-sizing:border-box"></div>
<div style="left:259px;top:729px;width:50px;height:20px;background:linear-gradient(#f1f1f1,#e3e3e3);border:1px solid #a3a3a8;box-sizing:border-box"></div>
<svg style="position:absolute;left:296px;top:736.0px" width="7" height="6"><path d="M0.7 1.3 L3.5 4.1 L6.3 1.3" stroke="#3a3a3a" stroke-width="1" fill="none"/></svg>
<div class="t" style="top:642.54px;font-size:10px;line-height:10px;color:#222;left:321.00px;transform:scaleX(0.8474);">FEBRUARY</div>
<div style="left:319px;top:659px;width:50px;height:20px;background:linear-gradient(#f1f1f1,#e3e3e3);border:1px solid #a3a3a8;box-sizing:border-box"></div>
<svg style="position:absolute;left:356px;top:666.0px" width="7" height="6"><path d="M0.7 1.3 L3.5 4.1 L6.3 1.3" stroke="#3a3a3a" stroke-width="1" fill="none"/></svg>
<div style="left:319px;top:692px;width:50px;height:20px;background:#fff;border:1px solid #a3a3a8;box-sizing:border-box"></div>
<div style="left:319px;top:729px;width:50px;height:20px;background:linear-gradient(#f1f1f1,#e3e3e3);border:1px solid #a3a3a8;box-sizing:border-box"></div>
<svg style="position:absolute;left:356px;top:736.0px" width="7" height="6"><path d="M0.7 1.3 L3.5 4.1 L6.3 1.3" stroke="#3a3a3a" stroke-width="1" fill="none"/></svg>
<div class="t" style="top:642.54px;font-size:10px;line-height:10px;color:#222;left:387.00px;transform:scaleX(0.9271);">MARCH</div>
<div style="left:379px;top:659px;width:50px;height:20px;background:linear-gradient(#f1f1f1,#e3e3e3);border:1px solid #a3a3a8;box-sizing:border-box"></div>
<svg style="position:absolute;left:416px;top:666.0px" width="7" height="6"><path d="M0.7 1.3 L3.5 4.1 L6.3 1.3" stroke="#3a3a3a" stroke-width="1" fill="none"/></svg>
<div style="left:379px;top:692px;width:50px;height:20px;background:#fff;border:1px solid #a3a3a8;box-sizing:border-box"></div>
<div style="left:379px;top:729px;width:50px;height:20px;background:linear-gradient(#f1f1f1,#e3e3e3);border:1px solid #a3a3a8;box-sizing:border-box"></div>
<svg style="position:absolute;left:416px;top:736.0px" width="7" height="6"><path d="M0.7 1.3 L3.5 4.1 L6.3 1.3" stroke="#3a3a3a" stroke-width="1" fill="none"/></svg>
<div class="t" style="top:642.54px;font-size:10px;line-height:10px;color:#222;left:451.50px;transform:scaleX(0.8649);">APRIL</div>
<div style="left:439px;top:659px;width:50px;height:20px;background:linear-gradient(#f1f1f1,#e3e3e3);border:1px solid #a3a3a8;box-sizing:border-box"></div>
<svg style="position:absolute;left:476px;top:666.0px" width="7" height="6"><path d="M0.7 1.3 L3.5 4.1 L6.3 1.3" stroke="#3a3a3a" stroke-width="1" fill="none"/></svg>
<div style="left:439px;top:692px;width:50px;height:20px;background:#fff;border:1px solid #a3a3a8;box-sizing:border-box"></div>
<div style="left:439px;top:729px;width:50px;height:20px;background:linear-gradient(#f1f1f1,#e3e3e3);border:1px solid #a3a3a8;box-sizing:border-box"></div>
<svg style="position:absolute;left:476px;top:736.0px" width="7" height="6"><path d="M0.7 1.3 L3.5 4.1 L6.3 1.3" stroke="#3a3a3a" stroke-width="1" fill="none"/></svg>
<div class="t" style="top:642.54px;font-size:10px;line-height:10px;color:#222;left:514.00px;transform:scaleX(0.9552);">MAY</div>
<div style="left:499px;top:659px;width:50px;height:20px;background:linear-gradient(#f1f1f1,#e3e3e3);border:1px solid #a3a3a8;box-sizing:border-box"></div>
<svg style="position:absolute;left:536px;top:666.0px" width="7" height="6"><path d="M0.7 1.3 L3.5 4.1 L6.3 1.3" stroke="#3a3a3a" stroke-width="1" fill="none"/></svg>
<div style="left:499px;top:692px;width:50px;height:20px;background:#fff;border:1px solid #a3a3a8;box-sizing:border-box"></div>
<div style="left:499px;top:729px;width:50px;height:20px;background:linear-gradient(#f1f1f1,#e3e3e3);border:1px solid #a3a3a8;box-sizing:border-box"></div>
<svg style="position:absolute;left:536px;top:736.0px" width="7" height="6"><path d="M0.7 1.3 L3.5 4.1 L6.3 1.3" stroke="#3a3a3a" stroke-width="1" fill="none"/></svg>
<div class="t" style="top:642.54px;font-size:10px;line-height:10px;color:#222;left:572.00px;transform:scaleX(0.9187);">JUNE</div>
<div style="left:559px;top:659px;width:50px;height:20px;background:linear-gradient(#f1f1f1,#e3e3e3);border:1px solid #a3a3a8;box-sizing:border-box"></div>
<svg style="position:absolute;left:596px;top:666.0px" width="7" height="6"><path d="M0.7 1.3 L3.5 4.1 L6.3 1.3" stroke="#3a3a3a" stroke-width="1" fill="none"/></svg>
<div style="left:559px;top:692px;width:50px;height:20px;background:#fff;border:1px solid #a3a3a8;box-sizing:border-box"></div>
<div style="left:559px;top:729px;width:50px;height:20px;background:linear-gradient(#f1f1f1,#e3e3e3);border:1px solid #a3a3a8;box-sizing:border-box"></div>
<svg style="position:absolute;left:596px;top:736.0px" width="7" height="6"><path d="M0.7 1.3 L3.5 4.1 L6.3 1.3" stroke="#3a3a3a" stroke-width="1" fill="none"/></svg>
<div class="t" style="top:642.54px;font-size:10px;line-height:10px;color:#222;left:633.50px;transform:scaleX(0.8854);">JULY</div>
<div style="left:619px;top:659px;width:50px;height:20px;background:linear-gradient(#f1f1f1,#e3e3e3);border:1px solid #a3a3a8;box-sizing:border-box"></div>
<svg style="position:absolute;left:656px;top:666.0px" width="7" height="6"><path d="M0.7 1.3 L3.5 4.1 L6.3 1.3" stroke="#3a3a3a" stroke-width="1" fill="none"/></svg>
<div style="left:619px;top:692px;width:50px;height:20px;background:#fff;border:1px solid #a3a3a8;box-sizing:border-box"></div>
<div style="left:619px;top:729px;width:50px;height:20px;background:linear-gradient(#f1f1f1,#e3e3e3);border:1px solid #a3a3a8;box-sizing:border-box"></div>
<svg style="position:absolute;left:656px;top:736.0px" width="7" height="6"><path d="M0.7 1.3 L3.5 4.1 L6.3 1.3" stroke="#3a3a3a" stroke-width="1" fill="none"/></svg>
<div class="t" style="top:642.54px;font-size:10px;line-height:10px;color:#222;left:685.50px;transform:scaleX(0.8879);">AUGUST</div>
<div style="left:679px;top:659px;width:50px;height:20px;background:linear-gradient(#f1f1f1,#e3e3e3);border:1px solid #a3a3a8;box-sizing:border-box"></div>
<svg style="position:absolute;left:716px;top:666.0px" width="7" height="6"><path d="M0.7 1.3 L3.5 4.1 L6.3 1.3" stroke="#3a3a3a" stroke-width="1" fill="none"/></svg>
<div style="left:679px;top:692px;width:50px;height:20px;background:#fff;border:1px solid #a3a3a8;box-sizing:border-box"></div>
<div style="left:679px;top:729px;width:50px;height:20px;background:linear-gradient(#f1f1f1,#e3e3e3);border:1px solid #a3a3a8;box-sizing:border-box"></div>
<svg style="position:absolute;left:716px;top:736.0px" width="7" height="6"><path d="M0.7 1.3 L3.5 4.1 L6.3 1.3" stroke="#3a3a3a" stroke-width="1" fill="none"/></svg>
<div class="t" style="top:642.54px;font-size:10px;line-height:10px;color:#222;left:738.00px;transform:scaleX(0.8430);">SEPTEMBER</div>
<div style="left:739px;top:659px;width:50px;height:20px;background:linear-gradient(#f1f1f1,#e3e3e3);border:1px solid #a3a3a8;box-sizing:border-box"></div>
<svg style="position:absolute;left:776px;top:666.0px" width="7" height="6"><path d="M0.7 1.3 L3.5 4.1 L6.3 1.3" stroke="#3a3a3a" stroke-width="1" fill="none"/></svg>
<div style="left:739px;top:692px;width:50px;height:20px;background:#fff;border:1px solid #a3a3a8;box-sizing:border-box"></div>
<div style="left:739px;top:729px;width:50px;height:20px;background:linear-gradient(#f1f1f1,#e3e3e3);border:1px solid #a3a3a8;box-sizing:border-box"></div>
<svg style="position:absolute;left:776px;top:736.0px" width="7" height="6"><path d="M0.7 1.3 L3.5 4.1 L6.3 1.3" stroke="#3a3a3a" stroke-width="1" fill="none"/></svg>
<div class="t" style="top:642.54px;font-size:10px;line-height:10px;color:#222;left:802.50px;transform:scaleX(0.8725);">OCTOBER</div>
<div style="left:799px;top:659px;width:50px;height:20px;background:linear-gradient(#f1f1f1,#e3e3e3);border:1px solid #a3a3a8;box-sizing:border-box"></div>
<svg style="position:absolute;left:836px;top:666.0px" width="7" height="6"><path d="M0.7 1.3 L3.5 4.1 L6.3 1.3" stroke="#3a3a3a" stroke-width="1" fill="none"/></svg>
<div style="left:799px;top:692px;width:50px;height:20px;background:#fff;border:1px solid #a3a3a8;box-sizing:border-box"></div>
<div style="left:799px;top:729px;width:50px;height:20px;background:linear-gradient(#f1f1f1,#e3e3e3);border:1px solid #a3a3a8;box-sizing:border-box"></div>
<svg style="position:absolute;left:836px;top:736.0px" width="7" height="6"><path d="M0.7 1.3 L3.5 4.1 L6.3 1.3" stroke="#3a3a3a" stroke-width="1" fill="none"/></svg>
<div class="t" style="top:642.54px;font-size:10px;line-height:10px;color:#222;left:858.00px;transform:scaleX(0.9085);">NOVEMBER</div>
<div style="left:859px;top:659px;width:50px;height:20px;background:linear-gradient(#f1f1f1,#e3e3e3);border:1px solid #a3a3a8;box-sizing:border-box"></div>
<svg style="position:absolute;left:896px;top:666.0px" width="7" height="6"><path d="M0.7 1.3 L3.5 4.1 L6.3 1.3" stroke="#3a3a3a" stroke-width="1" fill="none"/></svg>
<div style="left:859px;top:692px;width:50px;height:20px;background:#fff;border:1px solid #a3a3a8;box-sizing:border-box"></div>
<div style="left:859px;top:729px;width:50px;height:20px;background:linear-gradient(#f1f1f1,#e3e3e3);border:1px solid #a3a3a8;box-sizing:border-box"></div>
<svg style="position:absolute;left:896px;top:736.0px" width="7" height="6"><path d="M0.7 1.3 L3.5 4.1 L6.3 1.3" stroke="#3a3a3a" stroke-width="1" fill="none"/></svg>
<div class="t" style="top:642.54px;font-size:10px;line-height:10px;color:#222;left:919.50px;transform:scaleX(0.8644);">DECEMBER</div>
<div style="left:919px;top:659px;width:50px;height:20px;background:linear-gradient(#f1f1f1,#e3e3e3);border:1px solid #a3a3a8;box-sizing:border-box"></div>
<svg style="position:absolute;left:956px;top:666.0px" width="7" height="6"><path d="M0.7 1.3 L3.5 4.1 L6.3 1.3" stroke="#3a3a3a" stroke-width="1" fill="none"/></svg>
<div style="left:919px;top:692px;width:50px;height:20px;background:#fff;border:1px solid #a3a3a8;box-sizing:border-box"></div>
<div style="left:919px;top:729px;width:50px;height:20px;background:linear-gradient(#f1f1f1,#e3e3e3);border:1px solid #a3a3a8;box-sizing:border-box"></div>
<svg style="position:absolute;left:956px;top:736.0px" width="7" height="6"><path d="M0.7 1.3 L3.5 4.1 L6.3 1.3" stroke="#3a3a3a" stroke-width="1" fill="none"/></svg>
<div class="t" style="top:662.69px;font-size:11px;line-height:11px;color:#111;left:34.00px;">Offer of Coverage</div>
<div class="t" style="top:689.69px;font-size:11px;line-height:11px;color:#111;left:34.00px;transform:scaleX(0.9938);">Employee Required Contribution</div>
<div class="t" style="top:702.69px;font-size:11px;line-height:11px;color:#111;left:34.00px;transform:scaleX(0.9789);">(see instructions)</div>
<div class="t" style="top:725.69px;font-size:11px;line-height:11px;color:#111;left:34.00px;transform:scaleX(0.9747);">Section 4980H Safe Harbor and</div>
<div class="t" style="top:739.19px;font-size:11px;line-height:11px;color:#111;left:34.00px;transform:scaleX(0.9710);">Other Relief</div>
<div style="left:1268px;top:60px;width:185px;height:220px;background:#fff;border:3px solid #c3c3c3;box-sizing:border-box"></div>
<svg style="position:absolute;left:1281px;top:74px" width="28" height="40" viewBox="0 0 28 40">
<defs><radialGradient id="gbulb" cx="0.45" cy="0.4" r="0.6"><stop offset="0" stop-color="#ffd24a"/><stop offset="1" stop-color="#f9b92e"/></radialGradient></defs>
<path d="M4.3 20.8 Q8.6 25 9.2 30.4 H19.2 Q19.8 25 23.4 20.8 Z" fill="#fbbd35"/>
<circle cx="13.85" cy="12.6" r="12.3" fill="url(#gbulb)"/>
<path d="M4 12 Q4.5 4 12 2.6" stroke="#ffe08a" stroke-width="1" fill="none" opacity="0.8"/>
<rect x="9.3" y="30.8" width="9.3" height="5" fill="#666"/>
<ellipse cx="13.95" cy="36" rx="4.2" ry="2" fill="#6e6e6e"/>
</svg>
<div class="t" style="top:86.49px;font-size:19.5px;line-height:19.5px;color:#f47b20;font-weight:700;left:1314.00px;transform:scaleX(0.8808);">Tips</div>
<div class="t" style="top:75.27px;font-size:11.5px;line-height:11.5px;color:#000;font-weight:700;left:1392.00px;transform:scaleX(0.8732);">show less</div>
<div class="t" style="top:124.64px;font-size:12px;line-height:12px;color:#111;font-style:italic;left:1281.00px;transform:scaleX(0.9595);">Click Edit, Update Company</div>
<div class="t" style="top:140.64px;font-size:12px;line-height:12px;color:#111;font-style:italic;left:1281.00px;transform:scaleX(1.0218);">Information to review and/or</div>
<div class="t" style="top:156.64px;font-size:12px;line-height:12px;color:#111;font-style:italic;left:1281.00px;transform:scaleX(1.0116);">edit company information,</div>
<div class="t" style="top:172.64px;font-size:12px;line-height:12px;color:#111;font-style:italic;left:1281.00px;transform:scaleX(0.9603);">including DGE (Designated</div>
<div class="t" style="top:188.64px;font-size:12px;line-height:12px;color:#111;font-style:italic;left:1281.00px;transform:scaleX(0.9784);">Government Entity) and</div>
<div class="t" style="top:204.64px;font-size:12px;line-height:12px;color:#111;font-style:italic;left:1281.00px;transform:scaleX(1.0130);">masking/truncation options.</div>
<div class="t" style="top:253.34px;font-size:12px;line-height:12px;color:#1f8aa3;text-decoration:underline;left:1281.00px;transform:scaleX(1.0363);">More Information</div>
<div class="t" style="top:253.34px;font-size:12px;line-height:12px;color:#111;left:1378.50px;">&raquo;</div>
<svg style="position:absolute;left:1397px;top:255px" width="42" height="9"><path d="M0.7 4.2 L14.2 0.3 V8.2 Z M40.3 4.2 L27 0.3 V8.2 Z" fill="#000"/></svg>
<div style="left:1268px;top:300px;width:85px;height:85px;background:#038592;box-shadow:inset -2px -2px 0 #015d63"></div>
<div class="t" style="top:307.00px;font-size:13px;line-height:13px;color:#fff;font-weight:700;left:1274.00px;transform:scaleX(0.9098);">Add</div>
<div class="t" style="top:322.20px;font-size:13px;line-height:13px;color:#fff;font-weight:700;left:1274.00px;transform:scaleX(0.8629);">Employee</div>
<svg style="position:absolute;left:1323px;top:352px" width="26" height="26" viewBox="0 0 26 26">
<path d="M3.6 20.5 Q3.6 14.3 11.2 13.6 Q18.8 14.3 18.8 20.5 Q18.8 24.7 11.2 24.7 Q3.6 24.7 3.6 20.5 Z" fill="#2e2e2e"/>
<path d="M8.3 13.9 L11.2 24 L14.1 13.9 Z" fill="#f4f4f4"/>
<path d="M10.5 15.2 L11.2 24.2 L11.9 15.2 Z" fill="#d42020"/>
<ellipse cx="11.2" cy="8.3" rx="5" ry="5.3" fill="#f6d2c8"/>
<path d="M5.8 8 Q5 1.8 11.2 1.8 Q17 1.8 16.6 7.5 Q15 4.6 11.5 4.8 Q8 4.6 5.8 8 Z" fill="#8a4a26"/>
<circle cx="19.9" cy="20.2" r="4" fill="#76b041"/><path d="M19.9 18 V22.4 M17.7 20.2 H22.1" stroke="#fff" stroke-width="1.4"/></svg>
<div style="left:1363px;top:300px;width:85px;height:85px;background:#038592;box-shadow:inset -2px -2px 0 #015d63"></div>
<div class="t" style="top:307.00px;font-size:13px;line-height:13px;color:#fff;font-weight:700;left:1369.00px;transform:scaleX(0.8897);">Remove</div>
<div class="t" style="top:322.20px;font-size:13px;line-height:13px;color:#fff;font-weight:700;left:1369.00px;transform:scaleX(0.8629);">Employee</div>
<svg style="position:absolute;left:1418px;top:352px" width="26" height="26" viewBox="0 0 26 26">
<path d="M3.6 20.5 Q3.6 14.3 11.2 13.6 Q18.8 14.3 18.8 20.5 Q18.8 24.7 11.2 24.7 Q3.6 24.7 3.6 20.5 Z" fill="#2e2e2e"/>
<path d="M8.3 13.9 L11.2 24 L14.1 13.9 Z" fill="#f4f4f4"/>
<path d="M10.5 15.2 L11.2 24.2 L11.9 15.2 Z" fill="#d42020"/>
<ellipse cx="11.2" cy="8.3" rx="5" ry="5.3" fill="#f6d2c8"/>
<path d="M5.8 8 Q5 1.8 11.2 1.8 Q17 1.8 16.6 7.5 Q15 4.6 11.5 4.8 Q8 4.6 5.8 8 Z" fill="#8a4a26"/>
<circle cx="19.9" cy="20.2" r="4" fill="#e04030"/><path d="M17.6 20.2 H22.2" stroke="#fff" stroke-width="1.5"/></svg>
<div style="left:1268px;top:396px;width:85px;height:84px;background:#b6aca8;box-shadow:inset -2px -2px 0 #958c88"></div>
<div class="t" style="top:401.30px;font-size:13px;line-height:13px;color:#f5f2f0;font-weight:700;left:1274.00px;transform:scaleX(0.9098);">Add</div>
<div class="t" style="top:416.50px;font-size:13px;line-height:13px;color:#f5f2f0;font-weight:700;left:1274.00px;transform:scaleX(0.8649);">Covered</div>
<div class="t" style="top:431.70px;font-size:13px;line-height:13px;color:#f5f2f0;font-weight:700;left:1274.00px;transform:scaleX(0.9065);">Individual</div>
<svg style="position:absolute;left:1323px;top:447px" width="26" height="26" viewBox="0 0 26 26">
<path d="M3.6 20.5 Q3.6 14.3 11.2 13.6 Q18.8 14.3 18.8 20.5 Q18.8 24.7 11.2 24.7 Q3.6 24.7 3.6 20.5 Z" fill="#4a4a4a"/>
<path d="M8.3 13.9 L11.2 24 L14.1 13.9 Z" fill="#f4f4f4"/>
<path d="M10.5 15.2 L11.2 24.2 L11.9 15.2 Z" fill="#8a8a8a"/>
<ellipse cx="11.2" cy="8.3" rx="5" ry="5.3" fill="#ececec"/>
<path d="M5.8 8 Q5 1.8 11.2 1.8 Q17 1.8 16.6 7.5 Q15 4.6 11.5 4.8 Q8 4.6 5.8 8 Z" fill="#555"/>
<circle cx="19.9" cy="20.2" r="4" fill="#aaa4a1"/><path d="M19.9 18 V22.4 M17.7 20.2 H22.1" stroke="#fff" stroke-width="1.4"/></svg>
<div style="left:1363px;top:396px;width:85px;height:84px;background:#b6aca8;box-shadow:inset -2px -2px 0 #958c88"></div>
<div class="t" style="top:401.30px;font-size:13px;line-height:13px;color:#f5f2f0;font-weight:700;left:1369.00px;transform:scaleX(0.8897);">Remove</div>
<div class="t" style="top:416.50px;font-size:13px;line-height:13px;color:#f5f2f0;font-weight:700;left:1369.00px;transform:scaleX(0.8649);">Covered</div>
<div class="t" style="top:431.70px;font-size:13px;line-height:13px;color:#f5f2f0;font-weight:700;left:1369.00px;transform:scaleX(0.9065);">Individual</div>
<svg style="position:absolute;left:1418px;top:447px" width="26" height="26" viewBox="0 0 26 26">
<path d="M3.6 20.5 Q3.6 14.3 11.2 13.6 Q18.8 14.3 18.8 20.5 Q18.8 24.7 11.2 24.7 Q3.6 24.7 3.6 20.5 Z" fill="#4a4a4a"/>
<path d="M8.3 13.9 L11.2 24 L14.1 13.9 Z" fill="#f4f4f4"/>
<path d="M10.5 15.2 L11.2 24.2 L11.9 15.2 Z" fill="#8a8a8a"/>
<ellipse cx="11.2" cy="8.3" rx="5" ry="5.3" fill="#ececec"/>
<path d="M5.8 8 Q5 1.8 11.2 1.8 Q17 1.8 16.6 7.5 Q15 4.6 11.5 4.8 Q8 4.6 5.8 8 Z" fill="#555"/>
<circle cx="19.9" cy="20.2" r="4" fill="#aaa4a1"/><path d="M17.6 20.2 H22.2" stroke="#fff" stroke-width="1.5"/></svg>
<div class="t" style="top:495.15px;font-size:14px;line-height:14px;color:#000;font-weight:700;left:1280.00px;transform:scaleX(0.9464);">If there are errors on your</div>
<div class="t" style="top:510.15px;font-size:14px;line-height:14px;color:#000;font-weight:700;left:1280.00px;transform:scaleX(0.9451);">forms, they will be shown</div>
<div class="t" style="top:524.75px;font-size:14px;line-height:14px;color:#000;font-weight:700;left:1280.00px;transform:scaleX(0.9582);">below in <span style="color:#e00000;text-decoration:underline">red</span>.</div>
<div style="left:1268px;top:555px;width:185px;height:229px;background:#fff;border:3px solid #c3c3c3;box-sizing:border-box"></div>
<svg style="position:absolute;left:1282px;top:569px" width="45" height="40" viewBox="0 0 45 40">
<defs><linearGradient id="gw" x1="0" y1="0" x2="0" y2="1"><stop offset="0" stop-color="#ffffff"/><stop offset="1" stop-color="#d6d6d6"/></linearGradient></defs>
<path d="M20.6 3 Q22.2 0.8 23.8 3 L41.2 34 Q42.4 36.6 39.6 36.6 H4.8 Q2 36.6 3.2 34 Z" fill="url(#gw)" stroke="#c41e26" stroke-width="3.4" stroke-linejoin="round"/>
<path d="M19.6 12.6 H24.6 L23.6 26 H20.6 Z" fill="#3c3c3c"/>
<rect x="20.1" y="27.6" width="4" height="3.8" rx="0.8" fill="#3c3c3c"/>
</svg>
<div class="t" style="top:582.92px;font-size:19px;line-height:19px;color:#ee1111;font-weight:700;left:1334.70px;transform:scaleX(0.8838);">Errors:</div>
</body></html>
